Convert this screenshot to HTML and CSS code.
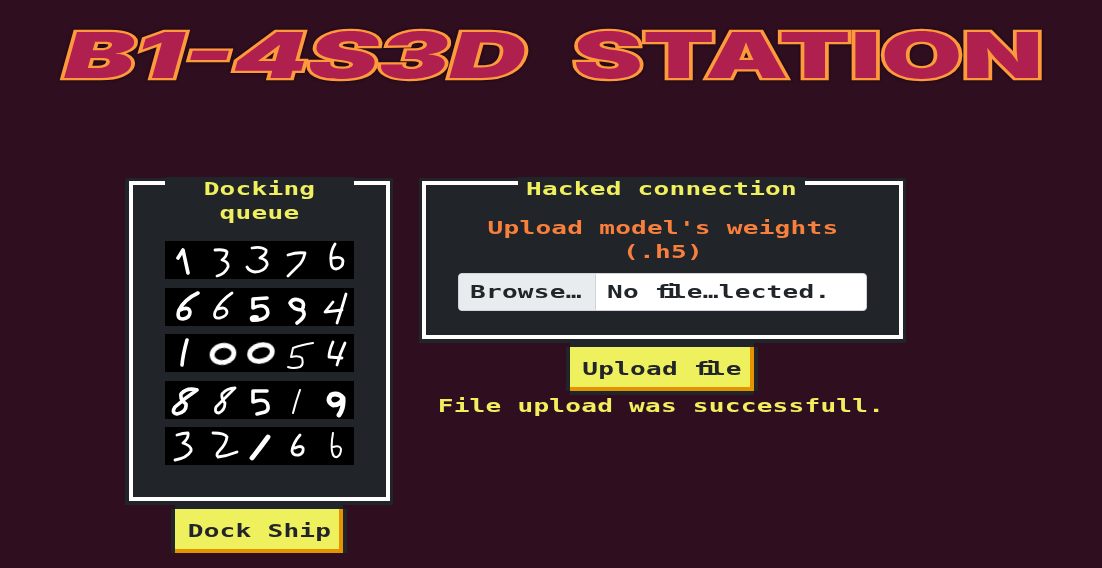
FILE: index.html
```html
<!DOCTYPE html>
<html lang="en">
<head>
    <meta charset="UTF-8">
    <title>B1-4S3D Station</title>
    <link rel="stylesheet" href="styles.css">
</head>
<body>

<header class="logo">
    <svg width="1102" height="100" viewBox="0 0 1102 100">
        <text class="logo-text logo-slant" x="64" y="78" textLength="462" lengthAdjust="spacingAndGlyphs">B1-4S3D</text>
        <text class="logo-text" x="573" y="78" textLength="470" lengthAdjust="spacingAndGlyphs">STATION</text>
    </svg>
</header>

<main class="station">
    <section class="column column-queue">
        <div class="panel">
            <h2 class="panel-title"><span class="px">Docking<br>queue</span></h2>
            <div class="digits">
                <svg class="digit-row" viewBox="0 0 189 38">
                    <path class="thick" d="M13 17L18 9L23 32"/>
                    <path d="M50 9Q60 8 62 11Q62 15 57 19Q64 21 63 26Q60 33 52 35"/>
                    <path d="M87 7Q96 5 101 9Q102 13 95 17Q103 19 102 24Q99 31 90 31Q84 30 82 26"/>
                    <path d="M123 14Q132 11 140 12Q138 21 133 25Q128 30 123 35"/>
                    <path d="M170 3Q165 11 166 20Q166 28 171 28Q178 27 178 20Q177 15 168 17"/>
                </svg>
                <svg class="digit-row" viewBox="0 0 189 38">
                    <path class="thick" d="M33 5Q20 11 14 22Q11 31 18 31Q25 30 25 24Q24 18 15 22"/>
                    <path d="M67 5Q55 13 50 24Q48 31 55 30Q62 28 62 24Q61 18 53 21"/>
                    <path class="thick" d="M102 10L88 11L88 20Q98 15 102 21Q105 28 97 31Q90 33 87 32Q85 28 92 29"/>
                    <path class="thick" d="M137 22Q128 22 125 15Q128 10 134 12Q141 14 137 22Q143 27 132 35"/>
                    <path d="M168 14L160 24L177 22M181 6Q177 20 172 35"/>
                </svg>
                <svg class="digit-row" viewBox="0 0 189 38">
                    <path class="thick" d="M22 6Q18 20 17 31"/>
                    <ellipse class="heavy" cx="58" cy="20" rx="11" ry="8.5" transform="rotate(-12 58 20)"/>
                    <ellipse class="heavy" cx="96" cy="19" rx="11.5" ry="8" transform="rotate(-15 96 19)"/>
                    <path class="thin" d="M148 9Q136 11 128 14L126 23Q134 21 137 24Q139 31 135 33Q128 35 123 33"/>
                    <path d="M168 8Q164 17 164 23L177 24M180 9Q175 19 172 31"/>
                </svg>
                <svg class="digit-row" viewBox="0 0 189 38">
                    <path class="thick" d="M32 9Q22 6 16 13Q15 19 21 23Q22 31 12 33Q6 32 10 26Q20 17 32 9"/>
                    <path d="M70 7Q62 7 57 13Q56 18 60 22Q60 29 54 32Q49 32 51 26Q60 17 70 7"/>
                    <path class="thick" d="M102 10L88 10L88 21Q98 17 102 22Q105 29 100 31L92 33"/>
                    <path class="thin" d="M135 9Q131 20 128 32"/>
                    <path class="heavy" d="M178 17Q173 11 166 14Q161 20 168 24Q176 24 178 17Q179 27 174 34"/>
                </svg>
                <svg class="digit-row" viewBox="0 0 189 38">
                    <path d="M12 8Q18 6 23 6Q24 11 18 16Q27 19 26 24Q22 31 10 33"/>
                    <path d="M48 6Q60 6 62 10Q61 17 55 23Q50 28 53 30Q62 29 72 25"/>
                    <path class="heavy" d="M103 10Q95 21 87 31"/>
                    <path d="M135 8Q128 16 127 24Q128 29 134 28Q139 26 138 21Q136 18 130 21"/>
                    <path class="thin" d="M168 6Q166 17 167 24Q168 31 172 30Q176 28 176 22Q175 18 168 20"/>
                </svg>
            </div>
        </div>
        <button class="pixel-btn btn-dock"><span class="px">Dock Ship</span></button>
    </section>

    <section class="column column-upload">
        <div class="panel">
            <h2 class="panel-title title-wide"><span class="px">Hacked connection</span></h2>
            <p class="upload-label"><span class="px">Upload model's weights<br>(.h5)</span></p>
            <div class="file-field">
                <span class="file-browse"><span class="px px-left">Browse…</span></span>
                <span class="file-name"><span class="px px-left">No <span class="lig">fi</span>le…lected.</span></span>
            </div>
        </div>
        <button class="pixel-btn btn-upload"><span class="px">Upload <span class="lig">fi</span>le</span></button>
        <p class="message"><span class="px">File upload was successfull.</span></p>
    </section>
</main>

</body>
</html>
```

FILE: styles.css
```css
body {
    margin: 0;
    background-color: #2e0e1f;
    color: #f0f05e;
    font-family: "DejaVu Sans Mono", "Liberation Mono", monospace;
    font-weight: bold;
    font-size: 18px;
    line-height: 24px;
    text-align: center;
}
/* the glyphs are drawn wider, the pixel font has square cells */
.px {
    display: inline-block;
    letter-spacing: 0.16px;
    white-space: nowrap;
    transform: scaleX(1.45);
}
.px-left {
    transform-origin: left center;
}
/* "fi" takes one cell in the pixel font */
.lig {
    letter-spacing: -5.3px;
}
.logo svg {
    display: block;
}
.logo-text {
    font-family: Inter, "DejaVu Sans", sans-serif;
    font-weight: 900;
    font-size: 63px;
    fill: #b0204e;
    stroke: #ff9a3c;
    stroke-width: 4.5px;
    stroke-linejoin: miter;
    paint-order: stroke;
    filter: drop-shadow(0 0 1.5px #150409);
}
.logo-slant {
    font-style: italic;
}
.station {
    display: flex;
    align-items: flex-start;
    gap: 32px;
    padding: 81px 0 0 129px;
}
.column {
    display: flex;
    flex-direction: column;
    align-items: center;
}
.column-queue {
    width: 261px;
}
.column-upload {
    width: 481px;
}
.panel {
    box-sizing: border-box;
    width: 100%;
    padding: 0 32px;
    background-color: #212529;
    border: 4px solid #fff;
    box-shadow: 0 0 0 3px #212529, 0 1px 0 3px #212529;
}
.column-queue .panel {
    box-shadow: 0 0 0 3px #212529, -1px 1px 0 3px #212529;
}
.panel-title {
    width: 189px;
    margin: -8px auto 16px;
    background-color: #212529;
    font-size: 18px;
    font-weight: bold;
}
.title-wide {
    width: 287px;
    margin: -8px 0 15px 60px;
}
.digits {
    display: flex;
    flex-direction: column;
    gap: 8.5px;
    width: 189px;
    margin-bottom: 32px;
}
.digit-row {
    display: block;
    width: 189px;
    height: 38px;
    background-color: #000;
}
.digit-row path,
.digit-row ellipse {
    fill: none;
    stroke: #fff;
    stroke-width: 2.8px;
    stroke-linecap: round;
    stroke-linejoin: round;
    filter: blur(0.6px);
}
.digit-row .thin {
    stroke-width: 2px;
}
.digit-row .thick {
    stroke-width: 3.6px;
}
.digit-row .heavy {
    stroke-width: 4.8px;
}
.upload-label {
    margin: 0 0 9px;
    color: #f97f3c;
}
.file-field {
    box-sizing: border-box;
    display: flex;
    height: 38px;
    margin-bottom: 24px;
    background-color: #fff;
    border: 1px solid #ced4da;
    border-radius: 4px;
    color: #212529;
    line-height: 36px;
    text-align: left;
    overflow: hidden;
}
.file-browse {
    box-sizing: border-box;
    width: 137px;
    padding-left: 11px;
    background-color: #e9ecef;
    border-right: 1px solid #ced4da;
}
.file-name {
    padding-left: 11px;
}
.pixel-btn {
    box-sizing: border-box;
    height: 44px;
    margin-right: 1px;
    padding: 0;
    background-color: #eef05e;
    border: none;
    box-shadow: inset -4px -4px #e59400, 0 -4px #212529, 0 4px #212529, -4px 0 #212529, 4px 0 #212529;
    color: #212529;
    font: inherit;
    cursor: pointer;
}
.btn-dock {
    width: 168px;
    margin-top: 8px;
}
.btn-upload {
    width: 184px;
    margin-top: 8px;
}
.message {
    margin: 3px 4px 0 0;
}
```
